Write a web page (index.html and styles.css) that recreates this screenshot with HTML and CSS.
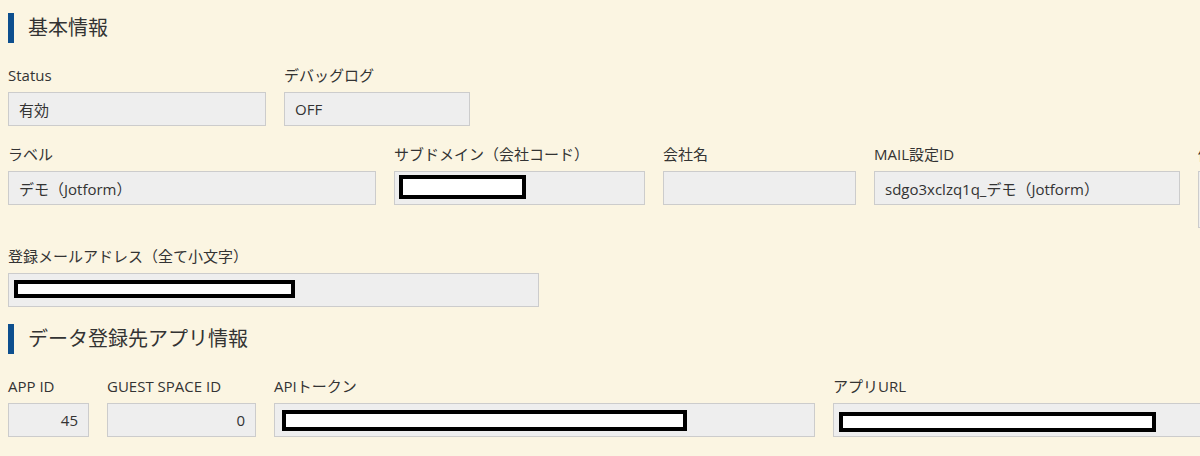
FILE: index.html
```html
<!DOCTYPE html>
<html lang="ja">
<head>
  <meta charset="UTF-8">
  <meta name="viewport" content="width=device-width, initial-scale=1.0">
  <title>基本情報</title>
  <link rel="stylesheet" href="styles.css">
</head>
<body>
  <div class="page">
    <h2 class="section-title">基本情報</h2>

    <div class="row">
      <div class="field w-status">
        <label>Status</label>
        <div class="field-box">有効</div>
      </div>
      <div class="field w-debug">
        <label>デバッグログ</label>
        <div class="field-box">OFF</div>
      </div>
    </div>

    <div class="row">
      <div class="field w-label">
        <label>ラベル</label>
        <div class="field-box">デモ（Jotform）</div>
      </div>
      <div class="field w-sub">
        <label>サブドメイン（会社コード）</label>
        <div class="field-box masked"><span class="mask mask-sub"></span></div>
      </div>
      <div class="field w-company">
        <label>会社名</label>
        <div class="field-box"></div>
      </div>
      <div class="field w-mailid">
        <label>MAIL設定ID</label>
        <div class="field-box">sdgo3xclzq1q_デモ（Jotform）</div>
      </div>
      <div class="field w-note">
        <label>備考</label>
        <div class="field-box tall"></div>
      </div>
    </div>

    <div class="row">
      <div class="field w-mail">
        <label>登録メールアドレス（全て小文字）</label>
        <div class="field-box masked"><span class="mask mask-mail"></span></div>
      </div>
    </div>

    <h2 class="section-title">データ登録先アプリ情報</h2>

    <div class="row">
      <div class="field w-appid">
        <label>APP ID</label>
        <div class="field-box num">45</div>
      </div>
      <div class="field w-guest">
        <label>GUEST SPACE ID</label>
        <div class="field-box num">0</div>
      </div>
      <div class="field w-token">
        <label>APIトークン</label>
        <div class="field-box masked"><span class="mask mask-token"></span></div>
      </div>
      <div class="field w-url">
        <label>アプリURL</label>
        <div class="field-box masked"><span class="mask mask-url"></span></div>
      </div>
    </div>
  </div>
</body>
</html>
```

FILE: styles.css
```css
body {
  margin: 0;
  padding: 0;
  background-color: #fbf5e2;
  color: #333;
  font-family: "Open Sans", "Noto Sans CJK JP", sans-serif;
  overflow: hidden;
}

.page {
  padding: 13px 0 0 8px;
  width: 1400px;
}

.section-title {
  margin: 0 0 22px;
  height: 30px;
  line-height: 30px;
  border-left: 6px solid #0d4f8e;
  padding-left: 14px;
  font-size: 20px;
  font-weight: normal;
  color: #333;
}

.row + .section-title {
  margin-top: -1px;
}

.row {
  display: flex;
  align-items: flex-start;
  gap: 18px;
  margin-bottom: 18px;
}

.field {
  flex: none;
}

.field label {
  display: block;
  font-size: 15px;
  line-height: 21px;
  margin-bottom: 6px;
  white-space: nowrap;
}

.field-box {
  box-sizing: border-box;
  height: 34px;
  display: flex;
  align-items: center;
  padding: 0 10px;
  background-color: #eeeeee;
  border: 1px solid #cccccc;
  font-size: 15px;
  white-space: nowrap;
}

.field-box.tall {
  height: 57px;
}

.field-box.num {
  justify-content: flex-end;
}

.field-box.masked {
  padding: 0;
}

.mask {
  box-sizing: border-box;
  display: block;
  background-color: #fff;
  border: 4px solid #000;
}

.mask-sub { width: 127px; height: 24px; margin: -2px 0 0 4px; }
.mask-mail { width: 281px; height: 18px; margin: -2px 0 0 5px; }
.mask-token { width: 405px; height: 21px; margin: 0 0 0 7px; }
.mask-url { width: 317px; height: 20px; margin: 3px 0 0 5px; }

.w-status { width: 258px; }
.w-debug { width: 186px; }
.w-label { width: 368px; }
.w-sub { width: 251px; }
.w-company { width: 193px; }
.w-mailid { width: 306px; }
.w-note { width: 300px; }
.w-mail { width: 531px; }
.w-appid { width: 81px; }
.w-guest { width: 149px; }
.w-token { width: 541px; }
.w-url { width: 400px; }
```
